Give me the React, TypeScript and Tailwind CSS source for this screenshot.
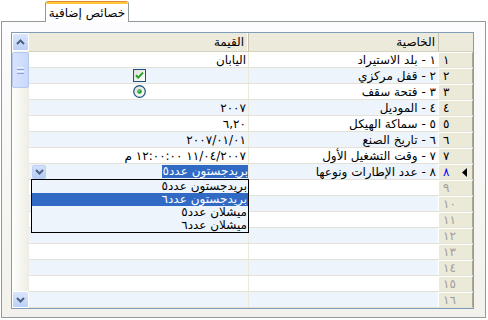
import React from "react";

type Row = { n: string; label?: string; value?: string; type?: "check" | "radio" | "combo" };

const rows: Row[] = [
  { n: "١", label: "١ - بلد الاستيراد", value: "اليابان" },
  { n: "٢", label: "٢ - قفل مركزي", type: "check" },
  { n: "٣", label: "٣ - فتحة سقف", type: "radio" },
  { n: "٤", label: "٤ - الموديل", value: "٢٠٠٧" },
  { n: "٥", label: "٥ - سماكة الهيكل", value: "٦,٢٠" },
  { n: "٦", label: "٦ - تاريخ الصنع", value: "٢٠٠٧/٠١/٠١" },
  { n: "٧", label: "٧ - وقت التشغيل الأول", value: "١١/٠٤/٢٠٠٧ ١٢:٠٠:٠٠ م" },
  { n: "٨", label: "٨ - عدد الإطارات ونوعها", type: "combo" },
  { n: "٩" },
  { n: "١٠" },
  { n: "١١" },
  { n: "١٢" },
  { n: "١٣" },
  { n: "١٤" },
  { n: "١٥" },
  { n: "١٦" },
];

const options = ["بريدجستون عدد٥", "بريدجستون عدد٦", "ميشلان عدد٥", "ميشلان عدد٦"];

function CheckBox() {
  return (
    <svg width="13" height="13" viewBox="0 0 13 13">
      <defs>
        <linearGradient id="cbg" x1="0" y1="0" x2="1" y2="1">
          <stop offset="0" stopColor="#dcdcd7" />
          <stop offset="1" stopColor="#ffffff" />
        </linearGradient>
      </defs>
      <rect x="0.5" y="0.5" width="12" height="12" fill="url(#cbg)" stroke="#1c5180" />
      <path d="M3 6.2 L5.2 8.6 L10 3.6" fill="none" stroke="#21a121" strokeWidth="2" />
    </svg>
  );
}

function Radio() {
  return (
    <svg width="13" height="13" viewBox="0 0 13 13">
      <defs>
        <linearGradient id="rbg" x1="0" y1="0" x2="1" y2="1">
          <stop offset="0" stopColor="#dcdcd7" />
          <stop offset="1" stopColor="#ffffff" />
        </linearGradient>
      </defs>
      <circle cx="6.5" cy="6.5" r="5.8" fill="url(#rbg)" stroke="#1c5180" strokeWidth="1.2" />
      <circle cx="6.5" cy="6.5" r="2.3" fill="#21a121" />
      <circle cx="6" cy="6" r="0.9" fill="#7fd77f" />
    </svg>
  );
}

function Chevron({ up }: { up?: boolean }) {
  return (
    <svg width="9" height="6" viewBox="0 0 9 6">
      <path
        d={up ? "M1 5 L4.5 1.5 L8 5" : "M1 1 L4.5 4.5 L8 1"}
        fill="none"
        stroke="#4d6185"
        strokeWidth="2"
      />
    </svg>
  );
}

function RowHeader({ n, idx }: { n: string; idx: number }) {
  const color = idx === 7 ? "text-[#0000ff]" : idx >= 8 ? "text-[#a0a0a0]" : "text-black";
  return (
    <div
      dir="ltr"
      className="w-[35px] shrink-0 h-full flex items-center bg-[#ebe9d8] border-l border-l-white border-r border-r-[#aca899] border-t border-t-white"
    >
      <span className={`pl-[4px] ${color}`}>{n}</span>
      {idx === 7 && (
        <svg className="ml-auto mr-[5px]" width="5" height="9" viewBox="0 0 5 9">
          <path d="M5 0 L0 4.5 L5 9 Z" fill="#000" />
        </svg>
      )}
    </div>
  );
}

function ValueCell({ row }: { row: Row }) {
  if (row.type === "check")
    return (
      <div className="flex-1 h-full flex items-center justify-center pl-[2px]">
        <CheckBox />
      </div>
    );
  if (row.type === "radio")
    return (
      <div className="flex-1 h-full flex items-center justify-center pl-[2px]">
        <Radio />
      </div>
    );
  if (row.type === "combo")
    return (
      <div className="flex-1 h-full relative flex items-center">
        <span className="bg-[#316ac5] text-white leading-[13px] h-[13px] pl-[1px]">{options[0]}</span>
        <div className="mr-auto ml-[3px] w-[14px] h-[14px] rounded-[2px] border border-[#bcd0f4] bg-gradient-to-b from-[#d3e0fb] to-[#b7cbf5] flex items-center justify-center">
          <Chevron />
        </div>
        <div className="absolute top-[15px] right-[-1px] w-[218px] border border-black bg-[#eef4fc] z-20">
          {options.map((o, i) => (
            <div
              key={o}
              className={`h-[13px] leading-[13px] pr-[1px] ${i === 1 ? "bg-[#316ac5] text-white" : "text-black"}`}
            >
              {o}
            </div>
          ))}
        </div>
      </div>
    );
  return <div className="flex-1 h-full flex items-center pr-[2px]">{row.value}</div>;
}

export default function App() {
  return (
    <div className="w-[488px] h-[320px] bg-white font-['DejaVu_Sans',sans-serif] text-[12px] leading-[14px] text-black overflow-hidden">
      <div className="pl-[1px] pt-[1px]">
        <div className="h-[20px] flex pl-[44px]">
          <div className="relative z-10 w-[84px] h-[21px] bg-white border-x border-[#919b9c] rounded-t-[3px] overflow-hidden flex flex-col">
            <div className="h-[1px] bg-[#e68b2c] mx-[1px]" />
            <div className="h-[2px] bg-[#ffc73c]" />
            <div dir="rtl" className="flex-1 flex items-center justify-center pb-[1px] text-[12px]">
              خصائص إضافية
            </div>
          </div>
        </div>
        <div className="w-[485px] h-[297px] border border-[#919b9c] bg-gradient-to-b from-[#fcfcfe] to-[#f2f1eb] pt-[10px] pl-[9px]">
          <div dir="rtl" className="w-[463px] h-[277px] border border-[#7f9db9] bg-white flex">
            <div className="w-[444px] flex flex-col">
              {/* header */}
              <div className="h-[19px] flex bg-[#ebeadb] border-b border-[#d6d2c2]">
                <div className="w-[35px] shrink-0 border-l border-[#c7c5b2]" />
                <div className="w-[190px] shrink-0 flex items-center pr-[3px] border-l border-[#c7c5b2]">
                  الخاصية
                </div>
                <div className="flex-1 flex items-center pr-[3px] border-r border-white">القيمة</div>
              </div>
              {rows.map((r, i) => (
                <div
                  key={i}
                  className={`h-[16px] flex border-b border-[#e4e2d6] ${i % 2 === 1 ? "bg-[#eef4fc]" : "bg-white"}`}
                >
                  <RowHeader n={r.n} idx={i} />
                  <div className="w-[190px] shrink-0 h-full flex items-center pr-[2px] border-l border-[#ebe9d8] whitespace-nowrap">
                    {r.label}
                  </div>
                  <ValueCell row={r} />
                </div>
              ))}
            </div>
            {/* scrollbar */}
            <div className="w-[17px] flex flex-col bg-gradient-to-l from-[#eeede5] to-[#fefefb]">
              <div className="h-[18px] flex items-center justify-center rounded-[2px] border border-white bg-gradient-to-b from-[#dbe6fd] to-[#bcd0f6]">
                <Chevron up />
              </div>
              <div className="h-[36px] mt-[1px] rounded-[2px] border border-[#b5c8f0] bg-gradient-to-l from-[#c9d8fb] to-[#d8e3fd] flex flex-col items-center justify-center gap-[1px]">
                <div className="w-[7px] h-[1px] bg-[#eef3fe]" />
                <div className="w-[7px] h-[1px] bg-[#8ca6df]" />
                <div className="w-[7px] h-[1px] bg-[#eef3fe]" />
                <div className="w-[7px] h-[1px] bg-[#8ca6df]" />
              </div>
              <div className="flex-1" />
              <div className="h-[17px] flex items-center justify-center rounded-[2px] border border-white bg-gradient-to-b from-[#dbe6fd] to-[#bcd0f6]">
                <Chevron />
              </div>
            </div>
          </div>
        </div>
      </div>
    </div>
  );
}
